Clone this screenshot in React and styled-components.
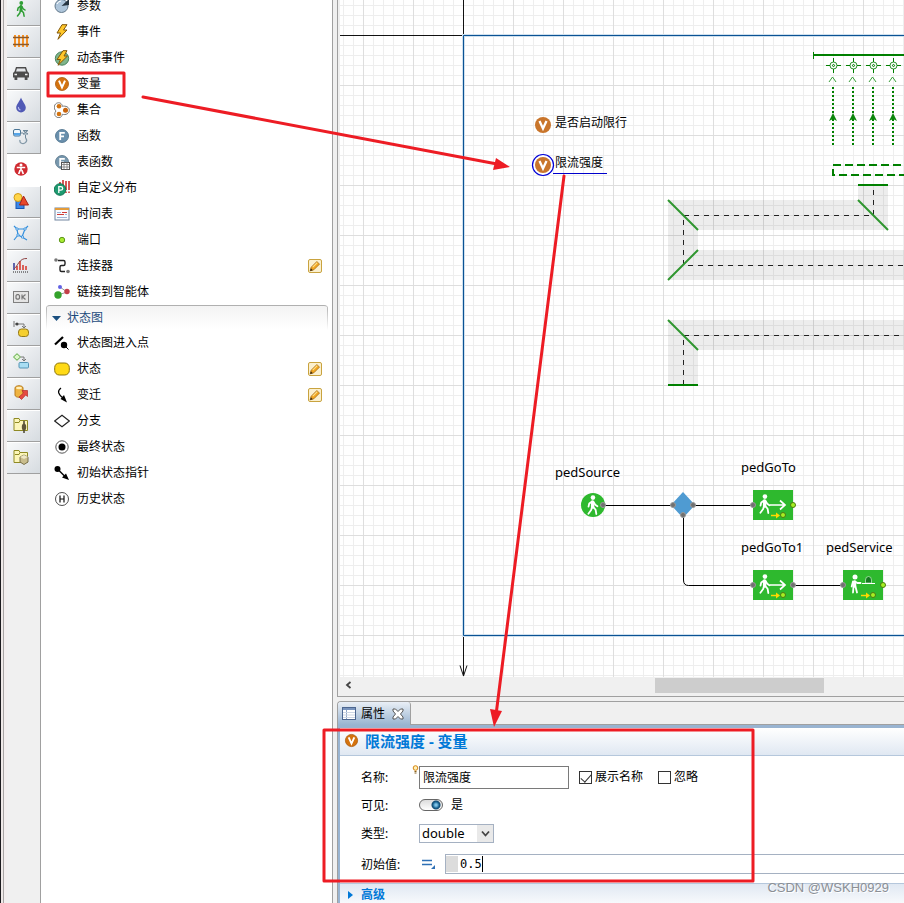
import React from "react";
import styled, { createGlobalStyle } from "styled-components";

const GlobalStyle = createGlobalStyle`
  * { box-sizing: border-box; }
  body {
    margin: 0;
    background: #f0f0f0;
    color: #000;
    font: 12px/16px "Noto Sans", "Noto Sans CJK SC", sans-serif;
  }
  button, input, select { font: inherit; color: inherit; margin: 0; }
`;

const Workbench = styled.div`
  position: relative;
  display: flex;
  height: 100vh;
  overflow: hidden;
  background: #f0f0f0;
`;

const WindowEdge = styled.div`
  flex: none;
  width: 7px;
  background: linear-gradient(90deg, #1c1a1e 0 1px, #efe9e8 1px 3px, #a8a5a5 3px 4px, #f2eeee 4px 7px);
`;

/* ---------- palette tabs ---------- */

const TabStrip = styled.nav`
  flex: none;
  width: 34px;
  padding-top: 26px;
  margin-top: -32px;
  border-right: 1px solid #a0a0a0;
  background: #f0f0f0;
`;

const StripTab = styled.button`
  display: flex;
  align-items: center;
  justify-content: center;
  width: ${(p) => (p.$active ? "34px" : "33px")};
  height: 32px;
  padding: 0 6px 2px 0;
  border: 0;
  border-bottom: 1px solid ${(p) => (p.$active ? "#fff" : "#a0a0a0")};
  box-shadow: ${(p) => (p.$active ? "none" : "inset 0 1px #fff")};
  background: ${(p) => (p.$active ? "#fff" : "linear-gradient(135deg, #f9fafb, #d6dbe0)")};
`;

/* ---------- palette ---------- */

const Palette = styled.aside`
  flex: none;
  width: 291px;
  background: #fff;
  overflow: hidden;
`;

const ItemList = styled.ul`
  list-style: none;
  margin: ${(p) => (p.$scrolled ? "-7px" : "0")} 0 0;
  padding: 0;
`;

const Item = styled.li`
  display: flex;
  align-items: center;
  gap: 7px;
  height: 26px;
  padding: 0 10px 0 13px;
`;

const ItemLabel = styled.span`
  flex: 1;
  line-height: 12px;
  white-space: nowrap;
`;

const EditButton = styled.button`
  display: flex;
  align-items: center;
  justify-content: center;
  width: 14px;
  height: 14px;
  padding: 0;
  border: 1px solid #c9a33f;
  border-radius: 2px;
  background: #fbf0cf;
`;

const GroupHeader = styled.button`
  display: flex;
  align-items: center;
  gap: 6px;
  width: calc(100% - 9px);
  height: 25px;
  margin: 0 4px 0 5px;
  padding: 0 6px;
  border: 0;
  border-top: 1px solid #b0b0b0;
  border-radius: 4px 4px 0 0;
  background:
    linear-gradient(#b0b0b0, #fff) left / 1px 100% no-repeat,
    linear-gradient(#b0b0b0, #fff) right / 1px 100% no-repeat,
    linear-gradient(#f3f3f3, #fff);
  color: #1c4a7c;
`;

/* ---------- editor ---------- */

const Sash = styled.div`
  flex: none;
  width: 5px;
  border-left: 1px solid #a0a0a0;
  background: #f0f0f0;
`;

const Main = styled.main`
  flex: 1;
  min-width: 0;
  display: flex;
  flex-direction: column;
  gap: 4px;
`;

const Editor = styled.section`
  flex: 1;
  min-height: 0;
  display: flex;
  flex-direction: column;
  padding: 0 0 3px 2px;
  border: solid #a0a0a0;
  border-width: 0 0 1px 1px;
`;

const Canvas = styled.div`
  flex: 1;
  min-height: 0;
  overflow: hidden;
  background:
    linear-gradient(90deg, #dedede 1px, transparent 1px) 23px 0 / 50px 50px,
    linear-gradient(#dedede 1px, transparent 1px) 0 35px / 50px 50px,
    linear-gradient(90deg, #eee 1px, transparent 1px) 3px 0 / 10px 10px,
    linear-gradient(#eee 1px, transparent 1px) 0 5px / 10px 10px,
    #fff;
`;

const Drawing = styled.svg`
  display: block;
  width: 100%;
  height: 100%;
  font: 12px "Noto Sans", "Noto Sans CJK SC", sans-serif;
`;

const ScrollBar = styled.div`
  display: grid;
  grid-template-columns: 17px 298fr 169fr 80fr;
  align-items: center;
  height: 16px;
`;

const ScrollButton = styled.button`
  display: flex;
  padding: 0 0 0 5px;
  border: 0;
  background: none;
`;

const ScrollThumb = styled.div`
  grid-column: 3;
  height: 15px;
  background: #cdcdcd;
`;

/* ---------- properties ---------- */

const Properties = styled.section`
  flex: none;
  border-left: 1px solid #a0a0a0;
  border-top: 1px solid #a0a0a0;
  border-top-left-radius: 4px;
`;

const ViewTabs = styled.div`
  display: flex;
  height: 23px;
  border-bottom: 1px solid #a0a0a0;
`;

const ViewTab = styled.div`
  display: flex;
  align-items: center;
  gap: 5px;
  width: 73px;
  height: 23px;
  padding-left: 4px;
  border-right: 1px solid #a0a0a0;
  border-radius: 3px 3px 0 0;
  background: linear-gradient(#e9eff6, #99b4d1);
`;

const CloseButton = styled.button`
  display: flex;
  padding: 0;
  margin-left: 2px;
  border: 0;
  background: none;
`;

const ViewBody = styled.div`
  border: solid #99b4d1;
  border-width: 3px 0 0 2px;
  background: #fff;
`;

const TitleBar = styled.header`
  display: flex;
  align-items: center;
  gap: 6px;
  height: 28px;
  padding: 0 0 2px 4px;
  border-bottom: 1px solid #b5c7dc;
  background: linear-gradient(#fff, #e0e8f2);
`;

const Title = styled.h1`
  margin: 0;
  font-size: 15px;
  line-height: 20px;
  font-weight: 700;
  color: #0078d7;
`;

const Form = styled.form`
  padding: 7px 0 2px 21px;
`;

const FormRow = styled.div`
  display: flex;
  align-items: center;
  height: ${(p) => (p.$tall ? "34px" : "28px")};
`;

const FieldLabel = styled.label`
  flex: none;
  width: ${(p) => (p.$narrow ? "52px" : "58px")};
  padding-top: 2px;
  white-space: nowrap;
`;

const NameField = styled.div`
  position: relative;
  width: 150px;
  margin-right: 10px;
`;

const Bulb = styled.svg`
  position: absolute;
  left: -7px;
  top: -1px;
`;

const TextInput = styled.input`
  display: block;
  width: 100%;
  height: 23px;
  padding: 0 3px;
  border: 1px solid #7a7a7a;
  background: #fff;
`;

const CheckLabel = styled.label`
  display: flex;
  align-items: center;
  gap: 3px;
  margin-right: 15px;
`;

const CheckBox = styled.input`
  appearance: none;
  display: flex;
  justify-content: center;
  width: 13px;
  height: 13px;
  border: 1px solid #333;
  background: #fff;
  &:checked::before {
    content: "";
    width: 5px;
    height: 9px;
    border: solid #333;
    border-width: 0 1px 1px 0;
    transform: rotate(42deg);
  }
`;

const Switch = styled.input`
  appearance: none;
  width: 24px;
  height: 12px;
  border: 1px solid #666;
  border-radius: 6px;
  background:
    radial-gradient(circle at 16px 5px, #7fc3e6 0 1px, #1c6796 3px, #12496f 4px, transparent 5px),
    linear-gradient(#dcdcdc, #fff);
`;

const SwitchText = styled.span`
  margin-left: 8px;
`;

const SelectBox = styled.div`
  position: relative;
  width: 75px;
`;

const Select = styled.select`
  appearance: none;
  display: block;
  width: 100%;
  height: 19px;
  padding: 0 2px;
  border: 1px solid #a5b1c2;
  border-radius: 0;
  font-size: 13px;
  line-height: 16px;
  background: linear-gradient(#e9e9e9, #e9e9e9) right / 16px 100% no-repeat #fff;
`;

const SelectArrow = styled.svg`
  position: absolute;
  right: 4px;
  top: 5px;
  pointer-events: none;
`;

const ModeButton = styled.button`
  display: flex;
  width: 24px;
  padding: 0;
  margin-left: 8px;
  border: 0;
  background: none;
`;

const CodeField = styled.div`
  flex: 1;
  display: flex;
  align-items: center;
  height: 20px;
  border: 1px solid #a5b1c2;
  border-right: 0;
`;

const Gutter = styled.span`
  width: 12px;
  height: 16px;
  background: #dcdcdc;
`;

const CodeInput = styled.input`
  width: 25px;
  height: 16px;
  padding: 0 0 0 2px;
  border: 0;
  border-right: 1px solid #000;
  outline: 0;
  font-family: "DejaVu Sans Mono", monospace;
`;

const SectionHeader = styled.button`
  display: flex;
  align-items: center;
  gap: 8px;
  width: 100%;
  height: 20px;
  padding: 3px 0 0 8px;
  border: 0;
  border-top: 1px solid #b5c7dc;
  background: linear-gradient(#e0e8f2, #f7f9fc);
  color: #0078d7;
  font-weight: 700;
`;

const Overlay = styled.svg`
  position: absolute;
  inset: 0;
  width: 100%;
  height: 100%;
  pointer-events: none;
`;

const Watermark = styled.span`
  position: absolute;
  right: 15px;
  bottom: 6px;
  font: 13px/18px "Liberation Sans", sans-serif;
  color: #8b8f95;
  text-shadow: 1px 1px #fff;
`;

/* ---------- icons ---------- */

const Svg = ({ size = 16, children }) => (
  <svg width={size} height={size} viewBox="0 0 16 16" fill="none" aria-hidden="true">
    {children}
  </svg>
);

const Walker = ({ color = "#fff" }) => (
  <g stroke={color} strokeWidth="1.500" fill="none" strokeLinecap="round" strokeLinejoin="round">
    <circle cx="8.300" cy="2" r="1.900" fill={color} stroke="none" />
    <path d="M8.500 9.500l2 2.300.6 3.400M7.500 9.500L6.800 12l-2.300 3M7.500 5.300L5.200 6.800 4.600 9.300M8.800 5.500l1.400 2.300 1.800 1.200" />
    <path d="M8 5.500v4" strokeWidth="2.800" />
  </g>
);

const Badge = ({ letter, fill, dark }) => (
  <g>
    <circle cx="8" cy="8" r="6.500" fill={fill} stroke={dark} strokeWidth=".8" />
    {letter === "V" && <path d="M5 4.700L8 11.300l3-6.600" stroke="#fff" strokeWidth="2" />}
    {letter === "F" && <path d="M6.200 12V4.900h4.600M6.200 8.300h3.800" stroke="#fff" strokeWidth="1.800" />}
    {letter === "H" && <path d="M6 4.500v7M10 4.500v7M6 8h4" stroke="#111" strokeWidth="1.200" />}
  </g>
);

const icons = {
  walk: <Walker color="#2f9e35" />,
  rails: (
    <>
      <path d="M2 2v12M6 2v12M10 2v12M14 2v12" stroke="#f79226" strokeWidth="2" />
      <path d="M0 4.500h16M0 11.500h16" stroke="#8b5a2b" strokeWidth="1.300" />
    </>
  ),
  car: (
    <>
      <path d="M3 2h10l1.500 4.500L16 8v4.500h-1.500V15h-2.800v-2.500H4.300V15H1.500v-2.500H0V8l1.500-1.500z" fill="#4c4c4c" />
      <path d="M4 3.500h8l1 3H3z" fill="#e3e6e9" />
      <path d="M1.500 9.500h2.500M12 9.500h2.500" stroke="#eee" strokeWidth="1.500" />
    </>
  ),
  drop: (
    <>
      <path d="M8 .5C7 4 3.200 7.300 3.200 10.700a4.800 4.800 0 009.600 0C12.800 7.300 9 4 8 .5z" fill="#5059b5" />
      <path d="M5.500 10a2.500 2.500 0 002 3" stroke="#b5baf0" strokeWidth="1.200" />
    </>
  ),
  hook: (
    <>
      <rect x=".5" y=".5" width="7" height="6.500" rx="1.500" fill="#f2f8fd" stroke="#4a7595" />
      <path d="M1 4h6v2.500H1z" fill="#56a5e8" />
      <path d="M7 4h3M10 1.500h5M10 5h5M10 1.500L15 5M15 1.500L10 5M12.500 6v3" stroke="#6d8799" />
      <path d="M12.500 9c3 3-1 7-4.500 5-1-.6-1.200-2-1-3" stroke="#8499a8" strokeWidth="1.300" />
    </>
  ),
  agent: (
    <>
      <circle cx="8" cy="8" r="6.700" fill="#cf2b31" />
      <circle cx="8" cy="4" r="1.500" fill="#fff" />
      <path d="M3.800 6.500h8.400M8 6v3.500M7.200 9l-1.500 4M8.800 9l1.500 4" stroke="#fff" strokeWidth="1.700" />
    </>
  ),
  shapes: (
    <>
      <rect x="3" y="7" width="8" height="8.500" fill="#3b87e8" stroke="#1758b5" />
      <circle cx="5" cy="4.500" r="4" fill="#ffd54a" stroke="#d09a18" />
      <path d="M10.500 3l5 9h-9z" fill="#e9482c" stroke="#a92416" />
    </>
  ),
  network: (
    <>
      <path d="M1 1l3 3h8l3-3M4 4l1 6 4 2 3-8M9 12l5 3M5 10l-4 5" stroke="#338fdd" strokeWidth="1.200" />
      <path d="M3 3h2v2H3zM11 3h2v2h-2zM4 9h2v2H4zM8.500 11h2v2h-2z" fill="#fff" stroke="#338fdd" strokeWidth=".8" />
    </>
  ),
  chart: (
    <>
      <path d="M1 6v7" stroke="#5056a5" strokeWidth="1.800" />
      <path d="M4 9v4M7 4v9M10 8v5M13 9v4" stroke="#d95349" strokeWidth="1.800" />
      <path d="M1 12C5 9 6 1 14 1.500" stroke="#8d4141" />
      <path d="M0 15h16" stroke="#222" strokeDasharray="1 1" />
    </>
  ),
  ok: (
    <>
      <rect x=".5" y="2.500" width="15" height="11" fill="#e4e4e4" stroke="#808080" />
      <path d="M4 5.700h1.500l1 1v2.500l-1 1H4l-1-1V6.700zM9 5.500v5M12.500 5.500L9.500 8l3 2.500" stroke="#777" strokeWidth="1.200" />
    </>
  ),
  stateTab: (
    <>
      <path d="M1 0v6M2 3h9v4M9 5l2 2 2-2" stroke="#777" />
      <circle cx="4" cy="3" r="1.500" fill="#444" />
      <rect x="5.500" y="8" width="10" height="7.500" rx="3" fill="#f5cf2f" stroke="#957a1a" />
    </>
  ),
  actionTab: (
    <>
      <path d="M4 .7L7.500 4 4 7.300.5 4z" fill="#ddf7ca" stroke="#55a53a" />
      <path d="M7.500 4H11v4M9 6l2 2 2-2" stroke="#777" />
      <rect x="6" y="9.500" width="9.500" height="5.500" rx="1" fill="#a9def3" stroke="#5695b5" />
    </>
  ),
  dbTab: (
    <>
      <path d="M2 3c0-3 8-3 8 0v7c0 3-8 3-8 0z" fill="#efb341" stroke="#b67a1c" />
      <ellipse cx="6" cy="3" rx="3" ry="1.300" fill="#fff0bd" />
      <path d="M14.500 5.500v6l-1.800-1.500-4.200 4.500L6 12l4.500-4L9 5.500z" fill="#e64b42" stroke="#b12e29" strokeWidth=".7" />
    </>
  ),
  folderPen: (
    <>
      <path d="M1 13.500v-12h5l1 2h7.500v10z" fill="#fcf6ba" stroke="#8f8a24" />
      <path d="M2 5.500h4l1-2" stroke="#8f8a24" />
      <path d="M11 4v3M11 12v4" stroke="#4a4432" strokeWidth="1.500" />
      <ellipse cx="11" cy="10" rx="2.200" ry="3.500" fill="#5e563a" />
    </>
  ),
  folderCube: (
    <>
      <path d="M1 13.500v-12h5l1 2h7.500v10z" fill="#fcf6ba" stroke="#8f8a24" />
      <path d="M2 5.500h4l1-2" stroke="#8f8a24" />
      <path d="M11 6l4 2v5l-4 2.500L7 13V8z" fill="#c9bd8d" stroke="#7c7450" />
      <path d="M11 6l4 2-4 2-4-2z" fill="#eee7c6" />
    </>
  ),
  param: (
    <>
      <circle cx="7.500" cy="8" r="6.500" fill="#aec5da" stroke="#63798c" />
      <path d="M7.500 8l7.500-7v6z" fill="#263440" />
      <path d="M3 6a5 5 0 014-3" stroke="#fff" />
    </>
  ),
  event: <path d="M8 .7h5L9.500 6H13L4 15.300 6.500 9H3z" fill="#ffc72a" stroke="#80560a" />,
  dynEvent: (
    <>
      <circle cx="8" cy="8.500" r="6.700" fill="#7fb58b" stroke="#4a8560" />
      <path d="M9 .7h4L10 6h3.500L4 15.300 6.500 9.500H3z" fill="#ffc72a" stroke="#80560a" />
    </>
  ),
  variable: <Badge letter="V" fill="#d4730f" dark="#a85709" />,
  collection: (
    <>
      <path d="M2.500 1.300c2.500-1.300 5.500-.3 5.800 3 3.500-.7 7 .8 7 4s-3.500 5-7 4c-.3 3.500-4 4-6 2.600s-2-4-.3-6C-.5 7-.3 3 2.500 1.300z" fill="#fff" stroke="#777" />
      <circle cx="5" cy="4.300" r="2.300" fill="#d4730f" />
      <circle cx="11.500" cy="8.300" r="2.500" fill="#c9640c" />
      <circle cx="5" cy="12" r="2.300" fill="#d4730f" />
    </>
  ),
  fn: <Badge letter="F" fill="#6a90ad" dark="#456b87" />,
  tableFn: (
    <>
      <Badge letter="F" fill="#7898ae" dark="#506f83" />
      <rect x="7.500" y="8.500" width="8" height="7" fill="#fff" stroke="#555" />
      <path d="M7.500 10.500h8M7.500 13h8M10 8.500v7M13 8.500v7" stroke="#777" strokeWidth=".8" />
    </>
  ),
  dist: (
    <>
      <path d="M6 2v6M9 0v7M12 1v9M15 1v9" stroke="#cf2f2f" strokeWidth="1.600" />
      <path d="M12 11.500v1.500M15 11.500v1.500" stroke="#cf2f2f" strokeWidth="1.500" />
      <circle cx="6" cy="9.500" r="5.800" fill="#1e9a70" stroke="#0c7450" />
      <path d="M4.800 13V6.700h2c2.500 0 2.500 3.500 0 3.500h-2" stroke="#fff" strokeWidth="1.300" />
    </>
  ),
  schedule: (
    <>
      <rect x="1" y="2" width="14" height="12" fill="#f9fbff" stroke="#7286a0" />
      <path d="M1 3h14" stroke="#e39b39" strokeWidth="2" />
      <path d="M3 8.500h7M8 6.500h5" stroke="#cf3a35" strokeWidth="1.200" />
      <path d="M3 6.500h4M11 8.500h2M3 11.500h10" stroke="#9db4d4" />
    </>
  ),
  port: <circle cx="8" cy="8" r="2.700" fill="#a8ec31" stroke="#5d961c" />,
  connector: (
    <>
      <path d="M4 2.500h5.500q1.500 0 1.500 1.500v2q0 1.500-1.500 1.500h-2Q6 7.500 6 9v3q0 1.500 1.500 1.500H11" stroke="#222" strokeWidth="1.400" />
      <circle cx="2" cy="2" r="1.800" fill="#777" />
      <circle cx="14" cy="13.500" r="1.800" fill="#777" />
    </>
  ),
  link: (
    <>
      <path d="M4 11l9-3L6 3" stroke="#999" />
      <circle cx="6" cy="3" r="2" fill="#6262e4" />
      <circle cx="13" cy="7.500" r="2.700" fill="#c33f49" />
      <circle cx="4" cy="11" r="3.700" fill="#34a22b" />
    </>
  ),
  entry: (
    <>
      <path d="M1 9.500l8-7.500" stroke="#000" strokeWidth="2.200" />
      <path d="M8.500 8.500l6 6" stroke="#000" />
      <circle cx="10" cy="10" r="3.200" fill="#000" />
    </>
  ),
  state: <rect x=".7" y="2" width="14.600" height="12" rx="4.500" fill="#ffda16" stroke="#8b7410" />,
  transition: (
    <>
      <path d="M7 1C3 4 4 7 9 11" stroke="#000" strokeWidth="1.200" />
      <path d="M13 15.500L6.500 12 10 8z" fill="#000" />
    </>
  ),
  branch: <path d="M8 2.200L15.300 8 8 13.800.7 8z" stroke="#222" strokeWidth="1.100" />,
  final: (
    <>
      <circle cx="8" cy="8" r="6.200" fill="#fff" stroke="#555" />
      <circle cx="8" cy="8" r="3.500" fill="#000" />
    </>
  ),
  initial: (
    <>
      <path d="M3 3.500l8 8" stroke="#000" strokeWidth="1.400" />
      <circle cx="3.500" cy="4" r="3" fill="#000" />
      <path d="M15 15l-7-2.500 4-4z" fill="#000" />
    </>
  ),
  history: <Badge letter="H" fill="#fff" dark="#222" />,
};

const Icon = ({ name, size }) => <Svg size={size}>{icons[name]}</Svg>;

const Pencil = () => (
  <Svg size={12}>
    <path d="M1.500 14.500l1.500-5L10.500 2l3.500 3.500-7.500 7.500z" fill="#f2a520" stroke="#a06a14" />
    <path d="M5 9.500l6-6" stroke="#ffe28c" strokeWidth="1.500" />
    <path d="M1.500 14.500l1-3.500 2.500 2.500z" fill="#3a2a12" />
  </Svg>
);

/* ---------- data ---------- */

const stripTabs = [
  ["walk", "行人库"], ["rails", "轨道库"], ["car", "道路交通库"], ["drop", "流体库"], ["hook", "物料搬运库"],
  ["agent", "智能体"], ["shapes", "演示"], ["network", "空间标记"], ["chart", "分析"], ["ok", "控件"],
  ["stateTab", "状态图"], ["actionTab", "行动图"], ["dbTab", "连接"], ["folderPen", "图片"], ["folderCube", "三维物体"],
];

const agentItems = [
  ["param", "参数"], ["event", "事件"], ["dynEvent", "动态事件"], ["variable", "变量"],
  ["collection", "集合"], ["fn", "函数"], ["tableFn", "表函数"], ["dist", "自定义分布"],
  ["schedule", "时间表"], ["port", "端口"], ["connector", "连接器", true], ["link", "链接到智能体"],
];

const stateItems = [
  ["entry", "状态图进入点"], ["state", "状态", true], ["transition", "变迁", true], ["branch", "分支"],
  ["final", "最终状态"], ["initial", "初始状态指针"], ["history", "历史状态"],
];

const PaletteItems = ({ items, scrolled }) => (
  <ItemList $scrolled={scrolled}>
    {items.map(([icon, label, editable]) => (
      <Item key={label}>
        <Icon name={icon} />
        <ItemLabel>{label}</ItemLabel>
        {editable && (
          <EditButton type="button" aria-label={`绘制${label}`}>
            <Pencil />
          </EditButton>
        )}
      </Item>
    ))}
  </ItemList>
);

/* ---------- diagram ---------- */

const Port = ({ x, y, open }) => (
  <circle cx={x} cy={y} r="2.500" fill={open ? "#a6f022" : "#707070"} stroke={open ? "#4c7c10" : "#9a9a9a"} />
);

const BlockBase = ({ x, y, children }) => (
  <g>
    <rect x={x} y={y} width="40" height="30" fill="#2eb92e" />
    {children}
    <path d={`M${x + 18} ${y + 25.5}h7`} stroke="#ffd800" strokeWidth="1.500" />
    <path d={`M${x + 23} ${y + 22.5}l4 3-4 3z`} fill="#ffd800" />
    <Port x={x + 30} y={y + 25} open />
  </g>
);

const GoToBlock = ({ x, y }) => (
  <BlockBase x={x} y={y}>
    <g transform={`translate(${x + 2} ${y + 4}) scale(1.200 1.250)`}>
      <Walker />
    </g>
    <path d={`M${x + 17} ${y + 15}h15M${x + 27} ${y + 10.5}l5 4.500-5 4.500`} stroke="#fff" strokeWidth="1.700" fill="none" />
  </BlockBase>
);

const ServiceBlock = ({ x, y }) => (
  <BlockBase x={x} y={y}>
    <g stroke="#fff" fill="none" strokeWidth="1.800" strokeLinecap="round">
      <circle cx={x + 12} cy={y + 7} r="2.500" fill="#fff" stroke="none" />
      <path d={`M${x + 11.5} ${y + 12}v4`} strokeWidth="3.500" />
      <path d={`M${x + 10} ${y + 22.5}l.500-6M${x + 14} ${y + 22.5}l-1.500-6`} />
      <path d={`M${x + 12} ${y + 11.5}l2.500 1.500h3M${x + 10} ${y + 11.5}l-1.300 5`} />
    </g>
    <path d={`M${x + 22.5} ${y + 13}v-3a3 3.500 0 016 0v3z`} fill="#157a20" stroke="#b5e8b5" strokeWidth=".8" />
    <path d={`M${x + 19} ${y + 13.5}h13`} stroke="#fff" />
  </BlockBase>
);

const VariableNode = ({ y, label, selected }) => (
  <g>
    {selected && <circle cx="543" cy={y} r="10.500" fill="#fff" stroke="#0000d8" strokeWidth="1.200" />}
    <circle cx="543" cy={y} r="8" fill="#c9752b" />
    <path d={`M539.500 ${y - 4}L543 ${y + 3.5}l3.500-7.500`} stroke="#fff" strokeWidth="2.300" fill="none" />
    <text x="555" y={y + 2}>{label}</text>
    {selected && <path d={`M553 ${y + 8.5}h54`} stroke="#00c" />}
  </g>
);

const Lane = ({ x }) => (
  <g stroke="#008000" fill="none">
    <circle cx={x + 0.5} cy="65.500" r="3.500" stroke="#2a942a" />
    <circle cx={x + 0.5} cy="65.500" r="1" />
    <path d={`M${x - 7} 65.500h4M${x + 4} 65.500h4M${x + 0.5} 58v4M${x + 0.5} 69v4`} />
    <path d={`M${x - 4} 82l3.500-5 3.500 5`} stroke="#3ca03c" />
    <path d={`M${x} 87v59`} strokeWidth="2" strokeDasharray="2 2" />
    <path d={`M${x} 113l4 8-4-2-4 2z`} fill="#0b870b" stroke="none" />
  </g>
);

const Diagram = () => (
  <Drawing>
    <g transform="translate(-340 0)">
      <g fill="#000" fillOpacity=".07">
        <path d="M858 185h30v45H698v20h2000v30H668V200h190z" />
        <path d="M668 385V320h2000v30H698v35z" />
      </g>
      <g stroke="#222" fill="none" strokeDasharray="5 5">
        <path d="M683.500 265V215.500H873.500V190" />
        <path d="M688 265.500h2000" />
        <path d="M683.500 385V335.500h2000" />
      </g>
      <g stroke="#2f962f" strokeWidth="2">
        <path d="M668 200l30 30M858 200l30 30M668 280l30-30M668 320l30 30" />
        <path d="M858 185h30M668 385h30M814 55h2000" stroke="#008000" />
        <path d="M813.500 52v7" stroke="#008000" strokeWidth="1" />
      </g>
      {[833, 853, 873, 893].map((x) => <Lane key={x} x={x} />)}
      <path d="M2833 165H833V175H2833" fill="none" stroke="#008000" strokeWidth="2" strokeDasharray="8 4" />

      <path d="M340 35.500h123.500V0M463.500 636v40M460 665.500l3.500 10.500 3.500-10.500" fill="none" stroke="#111" />
      <path d="M2463 35.500H463.500V635.500H2463" fill="none" stroke="#cfe0ee" strokeWidth="3" />
      <path d="M2463 35.500H463.500V635.500H2463" fill="none" stroke="#0b5394" />

      <VariableNode y={125} label="是否启动限行" />
      <VariableNode y={165} label="限流强度" selected />

      <path d="M605 505.500h66M694 505.500h58M683.500 516v64q0 5.500 5 5.500h64M795 585.500h48" fill="none" stroke="#000" />
      <circle cx="593" cy="505" r="12" fill="#2eb92e" />
      <g transform="translate(583 495) scale(1.200 1.250)"><Walker /></g>
      <path d="M683 492l12 13-12 13-12-13z" fill="#4f9bd2" />
      <GoToBlock x={753} y={490} />
      <GoToBlock x={753} y={570} />
      <ServiceBlock x={843} y={570} />
      <Port x={603} y={505} />
      <Port x={673} y={505} />
      <Port x={693} y={505} />
      <Port x={683} y={515} />
      <Port x={753} y={505} />
      <Port x={793} y={505} open />
      <Port x={753} y={585} />
      <Port x={793} y={585} />
      <Port x={843} y={585} />
      <Port x={883} y={585} open />
      <g fontSize="13">
        <text x="555" y="477">pedSource</text>
        <text x="741" y="472">pedGoTo</text>
        <text x="741" y="552">pedGoTo1</text>
        <text x="826" y="552">pedService</text>
      </g>
    </g>
  </Drawing>
);

const Annotations = () => (
  <Overlay aria-hidden="true">
    <g fill="none" stroke="#ed1c24" strokeWidth="3" strokeLinejoin="round">
      <rect x="48" y="73" width="76" height="23" />
      <rect x="324" y="730" width="429" height="151" />
      <path d="M143 97l354 67M564 176l-68 539" strokeLinecap="round" />
    </g>
    <path d="M510 167l-17 3 3-12zM494 727l-4-18 12 2z" fill="#ed1c24" />
  </Overlay>
);

export default function App() {
  return (
    <Workbench>
      <GlobalStyle />
      <WindowEdge />
      <TabStrip>
        {stripTabs.map(([icon, label]) => (
          <StripTab key={icon} type="button" aria-label={label} $active={icon === "agent"}>
            <Icon name={icon} />
          </StripTab>
        ))}
      </TabStrip>
      <Palette>
        <PaletteItems items={agentItems} scrolled />
        <GroupHeader type="button">
          <svg width="9" height="5" viewBox="0 0 9 5"><path d="M0 0h9L4.500 5z" fill="#1c5080" /></svg>
          状态图
        </GroupHeader>
        <PaletteItems items={stateItems} />
      </Palette>
      <Sash />
      <Main>
        <Editor>
          <Canvas><Diagram /></Canvas>
          <ScrollBar>
            <ScrollButton type="button" aria-label="向左滚动">
              <svg width="7" height="8" viewBox="0 0 7 8"><path d="M5.500 1L2 4l3.500 3" fill="none" stroke="#444" strokeWidth="1.800" /></svg>
            </ScrollButton>
            <ScrollThumb />
          </ScrollBar>
        </Editor>
        <Properties>
          <ViewTabs>
            <ViewTab>
              <svg width="14" height="13" viewBox="0 0 14 13">
                <rect x=".5" y=".5" width="13" height="12" fill="#fff" stroke="#4c6690" />
                <path d="M1 2h12" stroke="#7793bd" strokeWidth="2" />
                <path d="M4.500 3v9" stroke="#8ea5c6" />
                <path d="M1 5.500h12M1 8h12M1 10.500h12" stroke="#ccd6e4" />
              </svg>
              <span>属性</span>
              <CloseButton type="button" aria-label="关闭">
                <svg width="12" height="12" viewBox="0 0 12 12">
                  <path d="M1 1h2.500L6 3.500 8.500 1H11v2L8.500 6 11 9v2H8.500L6 8.500 3.500 11H1V9l2.500-3L1 3z" fill="#fff" stroke="#555" />
                </svg>
              </CloseButton>
            </ViewTab>
          </ViewTabs>
          <ViewBody>
            <TitleBar>
              <Icon name="variable" size={15} />
              <Title>限流强度 - 变量</Title>
            </TitleBar>
            <Form onSubmit={(e) => e.preventDefault()}>
              <FormRow>
                <FieldLabel htmlFor="name">名称:</FieldLabel>
                <NameField>
                  <TextInput id="name" defaultValue="限流强度" />
                  <Bulb width="7" height="9" viewBox="0 0 7 9">
                    <circle cx="3.500" cy="3" r="2.300" fill="#fff0b5" stroke="#d58613" />
                    <path d="M2.500 6.500h2M2.500 8h2" stroke="#86611f" />
                  </Bulb>
                </NameField>
                <CheckLabel>
                  <CheckBox type="checkbox" defaultChecked />
                  展示名称
                </CheckLabel>
                <CheckLabel>
                  <CheckBox type="checkbox" />
                  忽略
                </CheckLabel>
              </FormRow>
              <FormRow>
                <FieldLabel htmlFor="visible">可见:</FieldLabel>
                <Switch id="visible" type="checkbox" role="switch" defaultChecked />
                <SwitchText>是</SwitchText>
              </FormRow>
              <FormRow>
                <FieldLabel htmlFor="type">类型:</FieldLabel>
                <SelectBox>
                  <Select id="type" defaultValue="double">
                    <option>double</option>
                    <option>int</option>
                    <option>boolean</option>
                  </Select>
                  <SelectArrow width="9" height="9" viewBox="0 0 9 9">
                    <path d="M1 2.500l3.500 4 3.500-4" fill="none" stroke="#444" strokeWidth="1.800" />
                  </SelectArrow>
                </SelectBox>
              </FormRow>
              <FormRow $tall>
                <FieldLabel htmlFor="initial" $narrow>初始值:</FieldLabel>
                <ModeButton type="button" aria-label="静态值">
                  <svg width="15" height="12" viewBox="0 0 15 12">
                    <path d="M1 2.500h10M1 6.500h10" stroke="#2f70b5" strokeWidth="1.300" />
                    <path d="M14 7v4h-4z" fill="#2f70b5" />
                  </svg>
                </ModeButton>
                <CodeField>
                  <Gutter />
                  <CodeInput id="initial" defaultValue="0.5" />
                </CodeField>
              </FormRow>
            </Form>
            <SectionHeader type="button">
              <svg width="5" height="8" viewBox="0 0 5 8"><path d="M0 0l5 4-5 4z" fill="#0078d7" /></svg>
              高级
            </SectionHeader>
          </ViewBody>
        </Properties>
      </Main>
      <Annotations />
      <Watermark>CSDN @WSKH0929</Watermark>
    </Workbench>
  );
}
